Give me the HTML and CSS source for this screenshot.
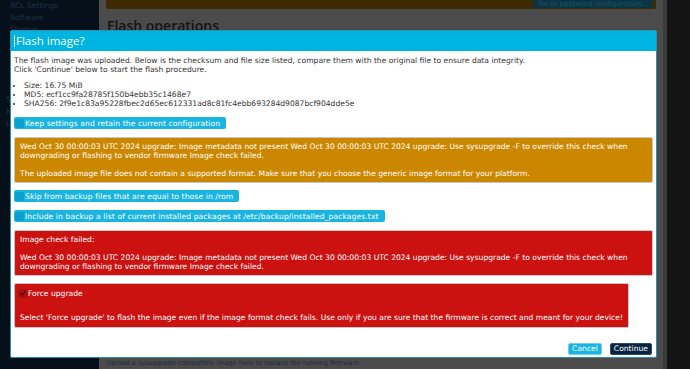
FILE: index.html
```html
<!DOCTYPE html>
<html lang="en">
<head>
<meta charset="utf-8">
<title>Flash image?</title>
<link rel="stylesheet" href="styles.css">
</head>
<body>
<div class="page">
  <aside class="sidebar">
    <div class="nav-top">
      <div class="nav-item">ACL Settings</div>
      <div class="nav-item">Software</div>
      <div class="nav-item">Startup</div>
    </div>
    <div class="nav-low">
      <div class="nav-item">S</div>
      <div class="nav-item">N</div>
      <div class="nav-item">L</div>
    </div>
  </aside>
  <main class="main">
    <div class="banner">
      <span class="banner-btn">Go to password configuration...</span>
    </div>
    <h2 class="main-title">Flash operations</h2>
    <div class="main-rest"></div>
    <div class="main-foot">Upload a sysupgrade-compatible image here to replace the running firmware.</div>
  </main>
  <div class="edge"></div>
</div>

<div class="modal">
  <div class="modal-head"><span class="caret"></span>Flash image?</div>
  <div class="modal-body">
    <p class="intro">The flash image was uploaded. Below is the checksum and file size listed, compare them with the original file to ensure data integrity.<br>Click 'Continue' below to start the flash procedure.</p>
    <ul class="facts">
      <li>Size: 16.75 MiB</li>
      <li>MD5: ecf1cc9fa28785f150b4ebb35c1468e7</li>
      <li>SHA256: 2f9e1c83a95228fbec2d65ec612331ad8c81fc4ebb693284d9087bcf904dde5e</li>
    </ul>
    <label class="pill"><span class="box"></span>Keep settings and retain the current configuration</label>
    <div class="alert warn">
      <p>Wed Oct 30 00:00:03 UTC 2024 upgrade: Image metadata not present Wed Oct 30 00:00:03 UTC 2024 upgrade: Use sysupgrade -F to override this check when downgrading or flashing to vendor firmware Image check failed.</p>
      <p>The uploaded image file does not contain a supported format. Make sure that you choose the generic image format for your platform.</p>
    </div>
    <label class="pill skip"><span class="box"></span>Skip from backup files that are equal to those in /rom</label>
    <label class="pill incl"><span class="box"></span>Include in backup a list of current installed packages at /etc/backup/installed_packages.txt</label>
    <div class="alert danger">
      <p>Image check failed:</p>
      <p>Wed Oct 30 00:00:03 UTC 2024 upgrade: Image metadata not present Wed Oct 30 00:00:03 UTC 2024 upgrade: Use sysupgrade -F to override this check when downgrading or flashing to vendor firmware Image check failed.</p>
    </div>
    <div class="alert danger force">
      <label class="force-row"><span class="check"><svg viewBox="0 0 10 10" width="8" height="8"><path d="M2 5.2 L4.2 7.4 L8.2 2.6" fill="none" stroke="#111" stroke-width="1.4"/></svg></span>Force upgrade</label>
      <p>Select 'Force upgrade' to flash the image even if the image format check fails. Use only if you are sure that the firmware is correct and meant for your device!</p>
    </div>
    <div class="actions">
      <button class="btn cancel">Cancel</button>
      <button class="btn go">Continue</button>
    </div>
  </div>
</div>
</body>
</html>
```
FILE: styles.css
```css
* { box-sizing: border-box; }
html, body { margin: 0; padding: 0; }
body {
  width: 690px;
  height: 369px;
  overflow: hidden;
  font-family: "DejaVu Sans", "Open Sans", sans-serif;
  background: #4b4b4b;
  position: relative;
}
.page {
  display: flex;
  height: 369px;
}
.sidebar {
  width: 99px;
  background: #06101a;
  color: #1d3247;
  font-size: 7.6px;
  padding: 0 0 0 10px;
  display: flex;
  flex-direction: column;
}
.nav-top { height: 30px; overflow: hidden; }
.nav-item { height: 12px; line-height: 12px; white-space: nowrap; overflow: hidden; }
.nav-low { margin-top: 64px; margin-left: -4px; width: 5px; }
.main {
  flex: 1;
  background: #4b4b4b;
  padding: 0 7px 0 7px;
  display: flex;
  flex-direction: column;
}
.banner {
  height: 9px;
  background: #3d2a00;
  border-radius: 0 0 2px 2px;
  display: flex;
  justify-content: flex-end;
  align-items: flex-start;
  padding-right: 3px;
  overflow: hidden;
}
.banner-btn {
  background: #0b3444;
  color: #1d5566;
  font-size: 7px;
  line-height: 8px;
  padding: 0 5px;
  border-radius: 0 0 2px 2px;
  white-space: nowrap;
}
.main-title {
  margin: 8px 0 0 1px;
  font-family: "Open Sans", sans-serif;
  font-size: 14px;
  font-weight: 600;
  color: #141414;
  line-height: 18px;
}
.main-rest { flex: 1; }
.main-foot {
  font-size: 6.5px;
  color: #1c2b3a;
  line-height: 9px;
  padding: 0 0 1px 1px;
  white-space: nowrap;
}
.edge {
  width: 27px;
  background: #141414;
  border-left: 4px solid #3a3a3a;
}
.modal {
  position: absolute;
  left: 10px;
  top: 30px;
  width: 647px;
  height: 328px;
  background: #fff;
  border: 1px solid #2a8fb0;
  border-radius: 2px;
  display: flex;
  flex-direction: column;
}
.modal-head {
  height: 20px;
  background: #00b4e1;
  color: #fff;
  font-family: "Open Sans", sans-serif;
  font-size: 11.5px;
  line-height: 20px;
  padding-left: 3px;
  display: flex;
  align-items: center;
}
.caret {
  width: 1px;
  height: 12px;
  background: #d8f3ff;
  margin-right: 1px;
}
.modal-body {
  flex: 1;
  padding: 5px 3px 0 3px;
  color: #333;
  font-size: 7.6px;
  line-height: 9px;
  display: flex;
  flex-direction: column;
  align-items: flex-start;
}
.intro { margin: 0; }
.facts { margin: 7px 0 9px 0; padding-left: 10px; }
.facts li { line-height: 9px; }
.pill {
  display: flex;
  align-items: center;
  height: 12px;
  background: #1ab4e2;
  color: #fff;
  border-radius: 2px;
  padding-right: 6px;
  letter-spacing: 0.1px;
  white-space: nowrap;
}
.box {
  width: 9px;
  height: 9px;
  border-radius: 2px;
  background: #0c9fd0;
  margin: 0 1px 0 1px;
}
.alert {
  align-self: stretch;
  color: #fff;
  border-radius: 2px;
  border: 1px solid #c6c6c6;
  padding: 4px 5px 4px 5px;
}
.alert p { margin: 0; }
.alert p + p { margin-top: 9px; }
.warn { background: #cc8700; margin: 8px 0 7px 0; }
.incl { margin-top: 8px; }
.danger { background: #cc1111; margin-top: 8px; }
.force { margin-top: 7px; margin-right: 24px; padding-top: 4px; padding-bottom: 5px; }
.force-row { display: flex; align-items: center; height: 10px; }
.check {
  width: 9px;
  height: 9px;
  border-radius: 2px;
  background: #b00d0d;
  display: flex;
  align-items: center;
  justify-content: center;
  margin: 0 1px 0 -2px;
}
.force p { margin-top: 15px; white-space: nowrap; }
.actions {
  align-self: stretch;
  display: flex;
  justify-content: flex-end;
  gap: 8px;
  margin-top: auto;
  margin-bottom: 2px;
  padding-right: 1px;
}
.btn {
  font-family: inherit;
  font-size: 7.6px;
  height: 12px;
  line-height: 10px;
  padding: 0 3px;
  border: 1px solid transparent;
  border-radius: 2px;
  color: #fff;
}
.cancel { background: #1ab4e2; border-color: #6fd0ee; }
.go { background: #0a2440; border-color: #2a4a6a; }
```
